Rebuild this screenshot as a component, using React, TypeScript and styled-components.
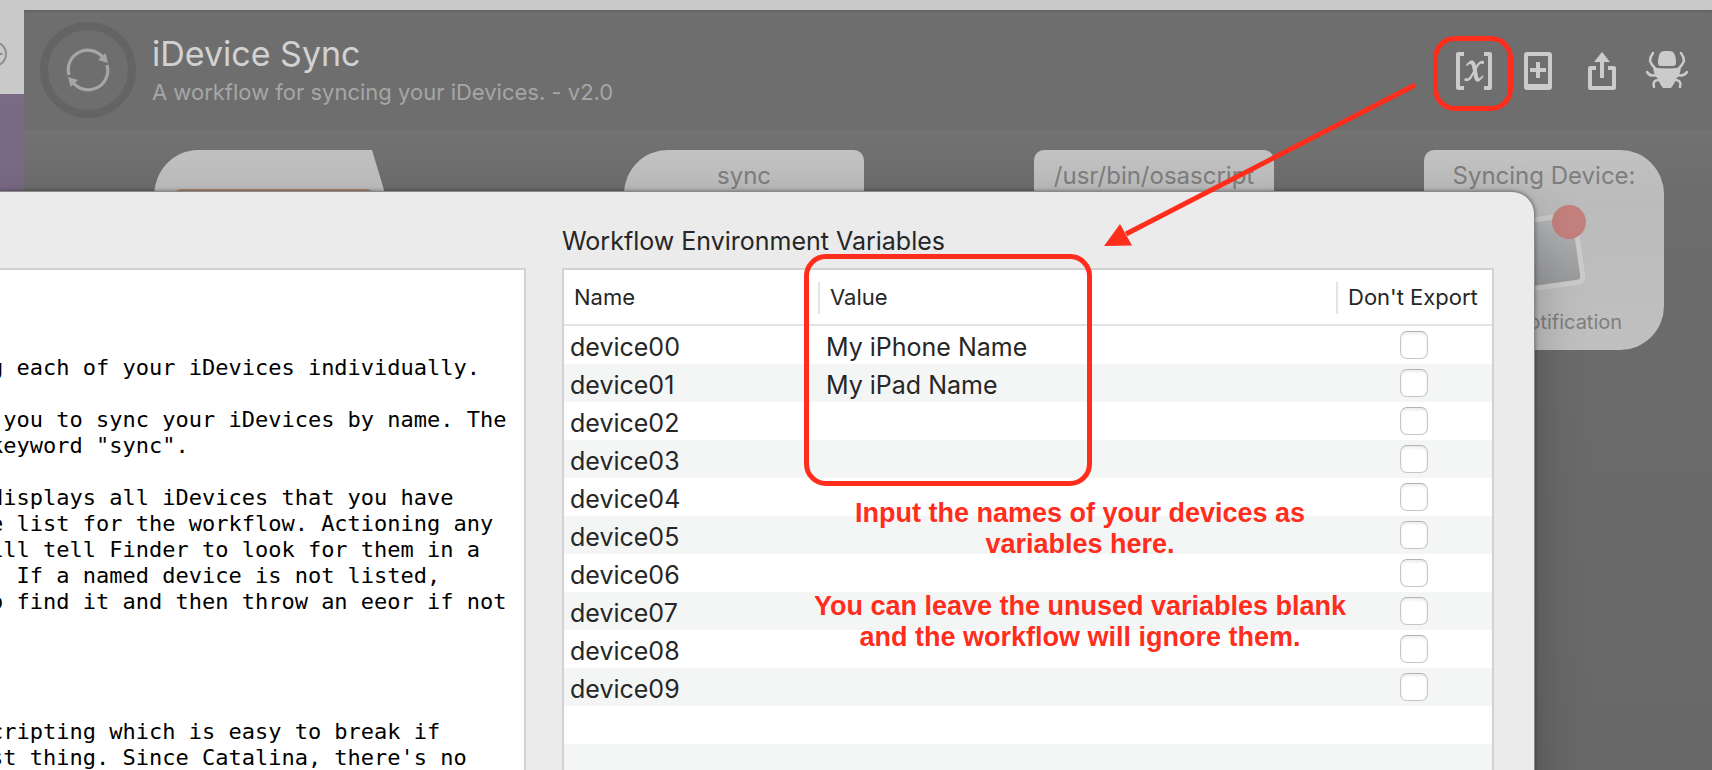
import React from "react";
import styled, { createGlobalStyle } from "styled-components";

const RED = "#ff2d1c";

const GlobalStyle = createGlobalStyle`
  *, *::before, *::after { box-sizing: border-box; }
  body { margin: 0; font-family: Inter, "Liberation Sans", sans-serif; }
`;

const Page = styled.div`
  position: relative;
  display: flex;
  flex-direction: column;
  height: 100vh;
  min-height: 640px;
  overflow: hidden;
  background: #6e6e6e;
`;

const TitleBar = styled.div`
  flex: none;
  height: 10px;
  background: #c9c9c9;
`;

const Body = styled.div`
  flex: 1;
  display: flex;
  min-height: 0;
`;

const Sidebar = styled.aside`
  flex: none;
  width: 24px;
  display: flex;
  flex-direction: column;
  background: linear-gradient(#7f6d89, #7a6a84 100px);
`;

const SidebarTop = styled.div`
  height: 84px;
  padding-top: 31px;
  background: #c9c9c9;
  svg { display: block; }
`;

const Main = styled.main`
  flex: 1;
  min-width: 0;
  display: flex;
  flex-direction: column;
`;

const Header = styled.header`
  flex: none;
  display: flex;
  align-items: flex-start;
  height: 120px;
  padding: 12px 24px 12px 16px;
  background: #6e6e6e;
  box-shadow: inset 0 2px 2px -1px #5e5e5e;
`;

const Logo = styled.svg`
  flex: none;
  display: block;
`;

const Titles = styled.div`
  flex: 1;
  padding: 10px 0 0 16px;
`;

const Title = styled.h1`
  margin: 0;
  font-size: 34px;
  line-height: 44px;
  font-weight: 400;
  color: #d2d2d2;
`;

const Subtitle = styled.p`
  margin: 0;
  font-size: 22px;
  line-height: 32px;
  color: #a6a6a6;
`;

const Tools = styled.div`
  display: flex;
  gap: 20px;
  padding-top: 26px;
`;

const ToolButton = styled.button`
  position: relative;
  width: 44px;
  height: 46px;
  padding: 0;
  border: 0;
  background: none;
  color: #cbcbcb;
  svg { display: block; }
`;

const Highlight = styled.span`
  position: absolute;
  border: 5px solid ${RED};
  border-radius: 22px;
  pointer-events: none;
`;

const ToolHighlight = styled(Highlight)`
  top: -12px;
  left: -19px;
  width: 80px;
  height: 75px;
`;

const Canvas = styled.section`
  position: relative;
  flex: 1;
  background: linear-gradient(#727272, #6c6c6c 70px, #686868);
`;

const Node = styled.div<{ $x: number; $radius: string }>`
  position: absolute;
  top: 20px;
  left: ${(p) => p.$x}px;
  width: 240px;
  height: 200px;
  display: flex;
  flex-direction: column;
  align-items: center;
  padding-top: 10px;
  border-radius: ${(p) => p.$radius};
  background: linear-gradient(#c2c2c2, #bbbbbb 50px, #c0c0c0);
  color: #7e7e7e;
`;

const NodeShape = styled.svg`
  position: absolute;
  top: 20px;
  left: 130px;
`;

const NodeTitle = styled.span`
  font-size: 24px;
  line-height: 32px;
`;

const NodeArt = styled.svg`
  display: block;
  margin: 4px 0 8px;
`;

const NodeCaption = styled.span`
  font-size: 20px;
  line-height: 28px;
`;

const Sheet = styled.section`
  position: absolute;
  top: 192px;
  left: -40px;
  right: 178px;
  bottom: -60px;
  display: flex;
  gap: 36px;
  padding: 0 40px 0 0;
  background: #ebebeb;
  border-radius: 0 22px 0 0;
  box-shadow: 0 0 0 1px #8a8a8a, 0 0 5px rgba(0, 0, 0, 0.6), 0 20px 50px rgba(0, 0, 0, 0.25);
`;

const Readme = styled.div`
  flex: none;
  width: 566px;
  margin-top: 76px;
  padding: 85px 0 0 28px;
  border: 2px solid #d2d2d2;
  background: #fff;
  color: #000;
  font-family: "DejaVu Sans Mono", monospace;
  font-size: 22px;
  line-height: 26px;
  white-space: pre;
`;

const Paragraph = styled.p<{ $gap?: number }>`
  margin: 0 0 ${(p) => p.$gap ?? 26}px;
`;

const Variables = styled.div`
  position: relative;
  flex: 1;
  min-width: 0;
  display: flex;
  flex-direction: column;
  padding-top: 31px;
`;

const Heading = styled.h2`
  margin: 0 0 9px;
  font-size: 25px;
  line-height: 36px;
  font-weight: 400;
  color: #262626;
`;

const TableFrame = styled.div`
  flex: 1;
  border: 2px solid #d2d2d2;
  background: repeating-linear-gradient(#fff 0 38px, #f4f5f5 38px 76px) 0 56px;
`;

const Table = styled.table`
  width: 100%;
  table-layout: fixed;
  border-collapse: separate;
  border-spacing: 0;
  color: #262626;
`;

const HeadCell = styled.th<{ $width?: number }>`
  position: relative;
  width: ${(p) => (p.$width ? `${p.$width}px` : "auto")};
  height: 56px;
  padding: 0 0 0 10px;
  border-bottom: 2px solid #e4e4e4;
  background: #fff;
  font-size: 22px;
  line-height: 28px;
  font-weight: 400;
  text-align: left;
  white-space: nowrap;
  th + &::before {
    content: "";
    position: absolute;
    left: -2px;
    top: 12px;
    width: 2px;
    height: 32px;
    background: #e4e4e4;
  }
`;

const Row = styled.tr`
  background: #fff;
  &:nth-child(even) { background: #f4f5f5; }
`;

const Cell = styled.td`
  height: 38px;
  padding: 5px 6px 1px;
  font-size: 25px;
  line-height: 32px;
  white-space: nowrap;
`;

const CheckCell = styled(Cell)`
  padding: 0 0 0 62px;
  line-height: 0;
`;

const Check = styled.input`
  appearance: none;
  display: block;
  width: 28px;
  height: 28px;
  margin: 0;
  border: 1px solid #c6c6c6;
  border-top-color: #b4b4b4;
  border-radius: 7px;
  background: #fff;
  box-shadow: inset 0 2px 3px #ececec;
`;

const ValueHighlight = styled(Highlight)`
  top: 62px;
  left: 242px;
  width: 288px;
  height: 232px;
`;

const Note = styled.div`
  position: absolute;
  top: 306px;
  left: 218px;
  width: 600px;
  color: ${RED};
  font-family: "Liberation Sans", Arial, sans-serif;
  font-size: 27px;
  line-height: 31px;
  font-weight: 700;
  text-align: center;
  p { margin: 0 0 31px; }
`;

const Arrow = styled.svg`
  position: absolute;
  top: 76px;
  right: 292px;
  pointer-events: none;
`;

const devices = [
  { name: "device00", value: "My iPhone Name" },
  { name: "device01", value: "My iPad Name" },
  { name: "device02", value: "" },
  { name: "device03", value: "" },
  { name: "device04", value: "" },
  { name: "device05", value: "" },
  { name: "device06", value: "" },
  { name: "device07", value: "" },
  { name: "device08", value: "" },
  { name: "device09", value: "" },
];

const SyncLogo = () => (
  <Logo width="96" height="96" viewBox="0 0 96 96" aria-hidden="true">
    <circle cx="48" cy="48" r="44" fill="none" stroke="#646464" strokeWidth="8" />
    <g fill="none" stroke="#a6a6a6" strokeWidth="3.2">
      <path d="M29 53A19.500 19.500 0 0 1 63 35.500" />
      <path d="M67 43A19.500 19.500 0 0 1 33 60.500" />
    </g>
    <path fill="#a6a6a6" d="M68 41L58 38L65.500 31Z" />
    <path fill="#a6a6a6" d="M28 55L38 58L30.500 65Z" />
  </Logo>
);

const VariableIcon = () => (
  <svg width="44" height="46" viewBox="0 0 44 46" fill="none" stroke="currentColor" aria-hidden="true">
    <g strokeWidth="4" strokeLinejoin="round">
      <path d="M12 6H6V40H12" />
      <path d="M32 6H38V40H32" />
    </g>
    <g strokeLinecap="round">
      <path strokeWidth="4" d="M19.500 14.500C22 14 22 19 23 23C24 28 24 32 26 31.500" />
      <path strokeWidth="1.800" d="M15 17C17 14.500 18 13.500 20 13.500M25 32.500C27 32.500 29 30.500 30.500 28.500" />
      <path strokeWidth="2.200" d="M31 14C27 13 24.500 19 22.500 23C20 27 18 33 13.500 32" />
    </g>
    <circle cx="30.500" cy="14.500" r="1.500" fill="currentColor" stroke="none" />
    <circle cx="14" cy="31.500" r="1.500" fill="currentColor" stroke="none" />
  </svg>
);

const AddIcon = () => (
  <svg width="44" height="46" viewBox="0 0 44 46" aria-hidden="true">
    <path fill="currentColor" fillRule="evenodd" d="M11 4H33Q36 4 36 7V39Q36 42 33 42H11Q8 42 8 39V7Q8 4 11 4ZM12 8V36H32V8Z" />
    <path stroke="currentColor" strokeWidth="4" d="M14 22H30M22 14V30" />
  </svg>
);

const ShareIcon = () => (
  <svg width="44" height="46" viewBox="0 0 44 46" aria-hidden="true">
    <path fill="none" stroke="currentColor" strokeWidth="4" strokeLinejoin="round" d="M16 20H10V40H34V20H28M22 30V10" />
    <path fill="currentColor" d="M22 4L30 14H14Z" />
  </svg>
);

const BugIcon = () => (
  <svg width="44" height="46" viewBox="0 0 44 46" aria-hidden="true">
    <path fill="currentColor" d="M14 15Q14 3 20 3H26Q32 3 32 15Q32 18 29 18H17Q14 18 14 15Z" />
    <path fill="currentColor" d="M9 19.500Q23 21.500 37 19.500Q36 28 32 31Q30 37 27 40H19Q16 37 14 31Q10 28 9 19.500Z" />
    <g fill="none" stroke="currentColor" strokeWidth="2.500" strokeLinecap="round">
      <path d="M11 20Q8 18 6 13Q6 9 9 5M35 20Q38 18 40 13Q40 9 37 5" />
      <path d="M12 27Q6 29 3 24M34 27Q40 29 43 24" />
      <path d="M15 32Q8 32 10 39M31 32Q38 32 36 39" />
    </g>
  </svg>
);

export default function App() {
  return (
    <Page>
      <GlobalStyle />
      <TitleBar />
      <Body>
        <Sidebar>
          <SidebarTop>
            <svg width="24" height="26" viewBox="0 0 24 26" fill="none" stroke="#8f8f8f" strokeWidth="2" aria-hidden="true">
              <circle cx="-6" cy="13" r="12" />
              <path fill="#8f8f8f" d="M-3 11.500L1 13L-3 14.500Z" />
            </svg>
          </SidebarTop>
        </Sidebar>
        <Main>
          <Header>
            <SyncLogo />
            <Titles>
              <Title>iDevice Sync</Title>
              <Subtitle>A workflow for syncing your iDevices. - v2.0</Subtitle>
            </Titles>
            <Tools>
              <ToolButton aria-label="Workflow variables">
                <VariableIcon />
                <ToolHighlight />
              </ToolButton>
              <ToolButton aria-label="Add"><AddIcon /></ToolButton>
              <ToolButton aria-label="Share"><ShareIcon /></ToolButton>
              <ToolButton aria-label="Debug"><BugIcon /></ToolButton>
            </Tools>
          </Header>
          <Canvas>
            <NodeShape width="240" height="60" viewBox="0 0 240 60" aria-hidden="true">
              <path fill="#bfbfbf" d="M0 60V46A44 46 0 0 1 44 0H218L236 60Z" />
              <rect x="21" y="39" width="198" height="20" rx="6" fill="#b08a72" />
            </NodeShape>
            <Node $x={600} $radius="44px 10px 10px 44px"><NodeTitle>sync</NodeTitle></Node>
            <Node $x={1010} $radius="10px"><NodeTitle>/usr/bin/osascript</NodeTitle></Node>
            <Node $x={1400} $radius="10px 44px 44px 10px">
              <NodeTitle>Syncing Device:</NodeTitle>
              <NodeArt width="100" height="104" viewBox="0 0 100 104" aria-hidden="true">
                <defs>
                  <linearGradient id="card" x1="0" y1="0" x2="0" y2="1">
                    <stop offset="0" stopColor="#b4b5b7" />
                    <stop offset="1" stopColor="#999a9c" />
                  </linearGradient>
                </defs>
                <rect x="12" y="23" width="73" height="68" rx="6" fill="url(#card)" stroke="#cbcbcb" strokeWidth="5" transform="rotate(-8 48 56)" />
                <circle cx="75" cy="26" r="17" fill="#c4807c" />
              </NodeArt>
              <NodeCaption>Post Notification</NodeCaption>
            </Node>
          </Canvas>
        </Main>
      </Body>

      <Sheet>
        <Readme>
          <Paragraph>g each of your iDevices individually.</Paragraph>
          <Paragraph>{" you to sync your iDevices by name. The\nkeyword \"sync\"."}</Paragraph>
          <Paragraph $gap={104}>
            {"displays all iDevices that you have\ne list for the workflow. Actioning any\nill tell Finder to look for them in a\n  If a named device is not listed,\no find it and then throw an eeor if not"}
          </Paragraph>
          <Paragraph>{"cripting which is easy to break if\nst thing. Since Catalina, there's no"}</Paragraph>
        </Readme>
        <Variables>
          <Heading>Workflow Environment Variables</Heading>
          <TableFrame>
            <Table>
              <thead>
                <tr>
                  <HeadCell $width={256}>Name</HeadCell>
                  <HeadCell>Value</HeadCell>
                  <HeadCell $width={154}>Don't Export</HeadCell>
                </tr>
              </thead>
              <tbody>
                {devices.map((d) => (
                  <Row key={d.name}>
                    <Cell>{d.name}</Cell>
                    <Cell>{d.value}</Cell>
                    <CheckCell>
                      <Check type="checkbox" aria-label={`Don't export ${d.name}`} />
                    </CheckCell>
                  </Row>
                ))}
              </tbody>
            </Table>
          </TableFrame>
          <ValueHighlight />
          <Note>
            <p>Input the names of your devices as<br />variables here.</p>
            <p>You can leave the unused variables blank<br />and the workflow will ignore them.</p>
          </Note>
        </Variables>
      </Sheet>
      <Arrow width="320" height="176" viewBox="0 0 320 176" aria-hidden="true">
        <path stroke={RED} strokeWidth="5" d="M26 158L315 9" />
        <path fill={RED} d="M4 170L20 148L32 169.500Z" />
      </Arrow>
    </Page>
  );
}
